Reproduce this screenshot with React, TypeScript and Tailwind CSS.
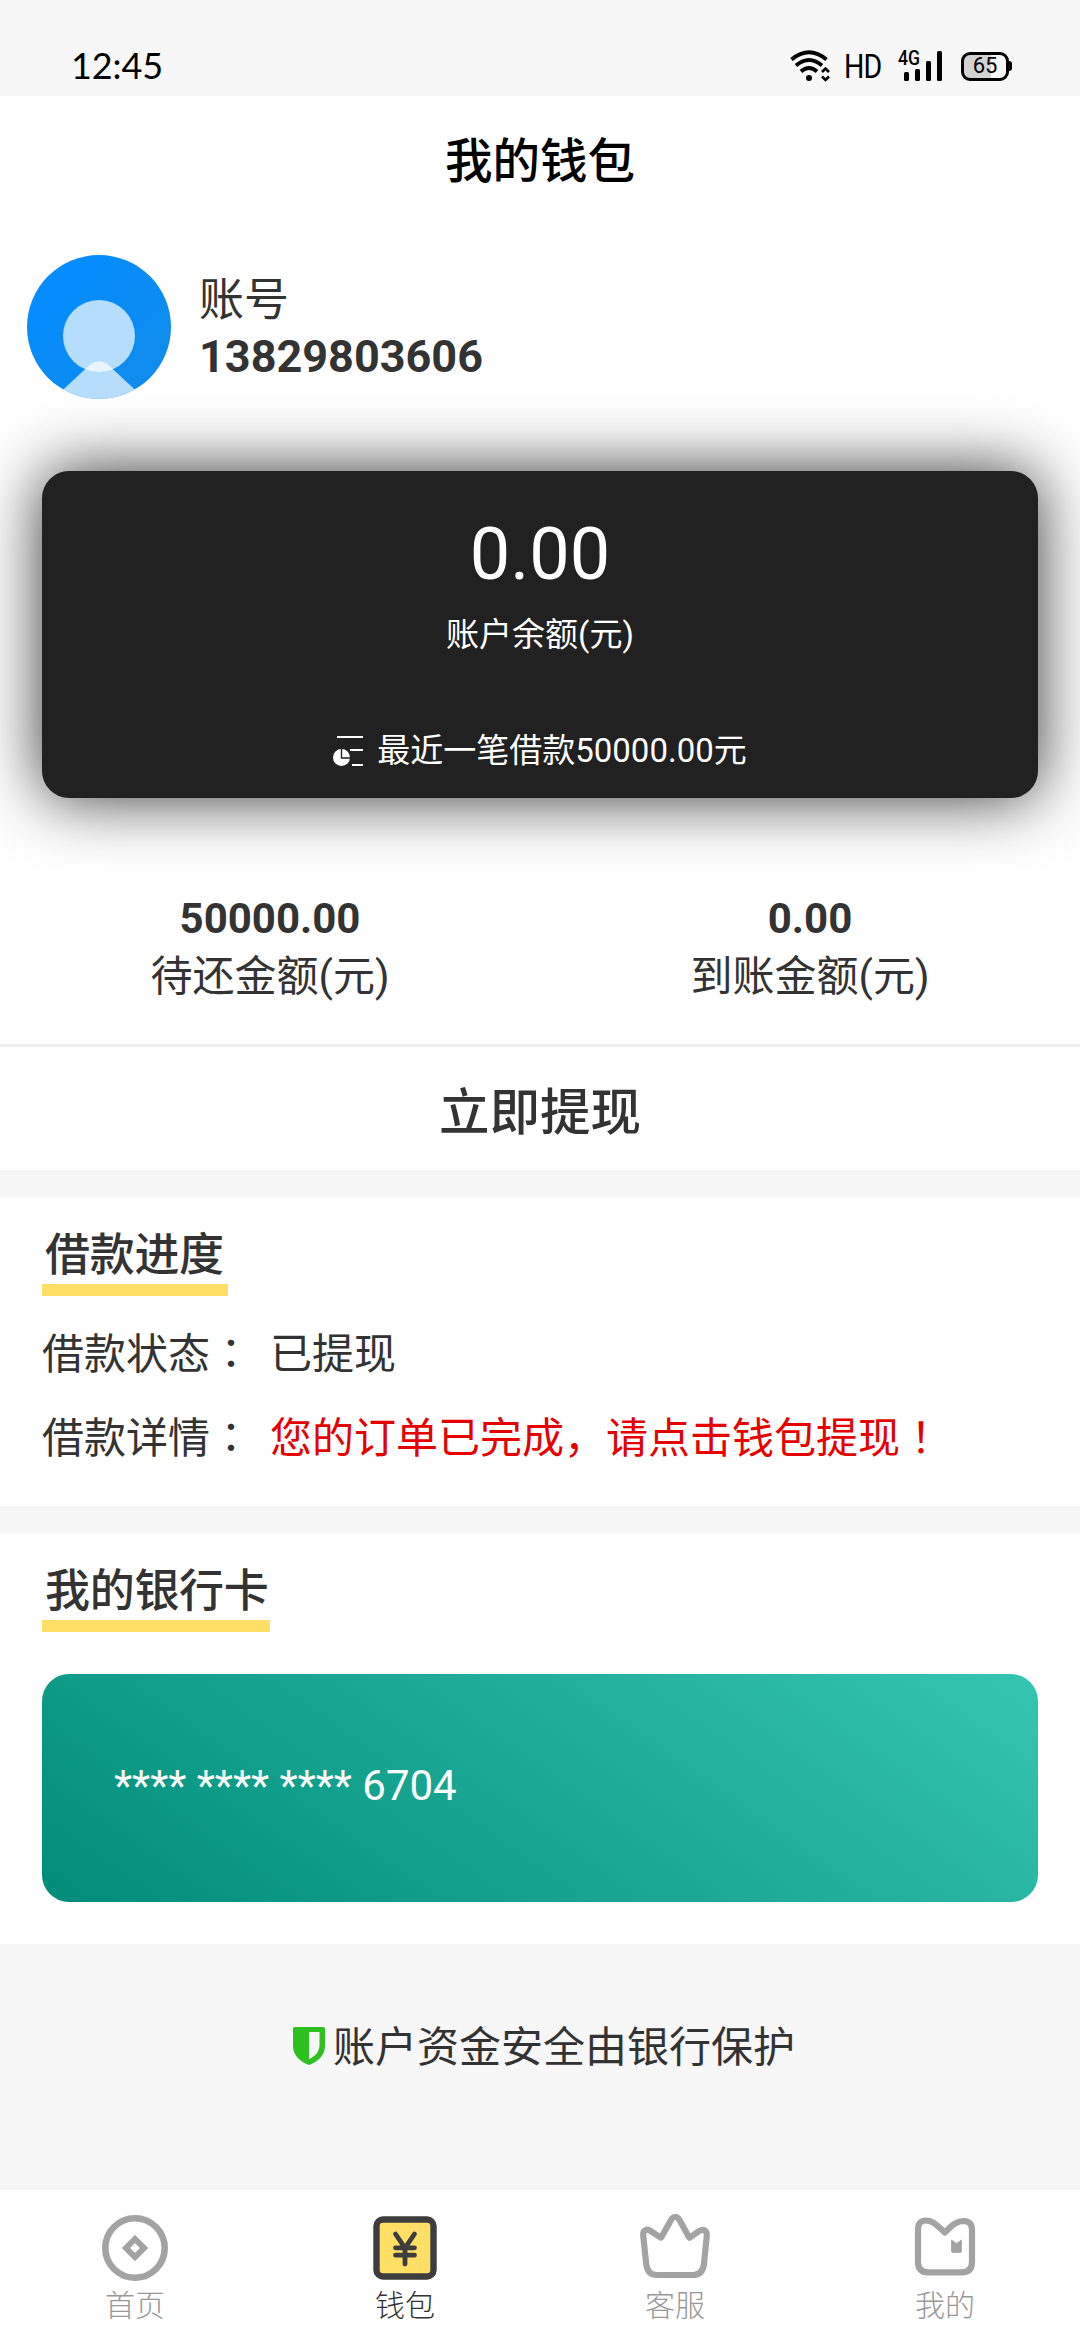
import type { ReactNode } from "react";

interface TabItem {
  label: string;
  icon: ReactNode;
  active?: boolean;
}

// Full-width punctuation is centred in its cell, as on the device font
function Punct({ children }: { children: string }) {
  return <span className="font-['Noto_Sans_CJK_TC',sans-serif] leading-[0]">{children}</span>;
}

function StatusBar() {
  return (
    <div className="flex h-24 items-start justify-between bg-[#f7f7f7] pl-[71px] pr-[68px] text-black">
      <span className="mt-[43px] font-['Lato',sans-serif] text-[36px] leading-[44px] tracking-[-0.1px]">12:45</span>
      <div className="mt-[50px] flex h-8 items-center">
        <svg width="41" height="32" viewBox="0 0 41 32" fill="none" stroke="#000" strokeWidth="3.8">
          <path d="M1.5 9.5 Q19 -5 36.500 9.500" />
          <path d="M6 15.500 Q19 4.500 32 15.500" />
          <path d="M11 21.500 Q19 14.500 27 21.500" />
          <circle cx="19" cy="28" r="3" fill="#000" stroke="none" />
          <path d="M32 22 L35.500 18.500 L39 22 M32 26.500 L35.500 30 L39 26.500" strokeWidth="2.6" />
        </svg>
        <span className="ml-[13px] w-[37px] font-['Roboto',sans-serif] text-[34px] leading-8 tracking-[-1px] origin-left scale-x-[0.84]">HD</span>
        <div className="relative ml-[17px] h-8 w-[45px]">
          <span className="absolute left-0 top-0 origin-left scale-x-[0.88] font-['Roboto',sans-serif] text-[20px] font-medium leading-4">4G</span>
          <svg width="45" height="32" viewBox="0 0 45 32" className="absolute left-0 top-0">
            <rect x="6" y="22" width="5" height="9" rx="1.500" />
            <rect x="17" y="19" width="5" height="12" rx="1.500" />
            <rect x="28" y="11" width="5" height="20" rx="1.500" />
            <rect x="39" y="1" width="5" height="30" rx="1.500" />
          </svg>
        </div>
        <div className="ml-[18px] flex items-center">
          <div className="flex h-[29px] w-[48px] items-center justify-center rounded-[9px] border-[3px] border-black bg-linear-to-r from-[#d2d2d2] from-65% to-[#f7f7f7] to-65% font-['Roboto',sans-serif] text-[22px] leading-none">
            65
          </div>
          <div className="h-2.5 w-[3px] rounded-r-full bg-black" />
        </div>
      </div>
    </div>
  );
}

function Avatar() {
  return (
    <svg width="144" height="144" viewBox="0 0 144 144">
      <defs>
        <clipPath id="avatar-clip">
          <circle cx="72" cy="72" r="72" />
        </clipPath>
        <linearGradient id="avatar-bg" x1="0" y1="0" x2="1" y2="1">
          <stop offset="0.2" stopColor="#058cff" />
          <stop offset="0.8" stopColor="#0f8ced" />
        </linearGradient>
      </defs>
      <g clipPath="url(#avatar-clip)">
        <rect width="144" height="144" fill="url(#avatar-bg)" />
        <circle cx="72" cy="81" r="36" fill="#fff" fillOpacity="0.7" />
        <path d="M62 110.500 Q72 102 82 110.500 L120 146 H24 Z" fill="#fff" fillOpacity="0.7" />
      </g>
    </svg>
  );
}

function BalanceCard() {
  return (
    <div className="mx-[42px] mt-[72px] flex h-[327px] flex-col items-center rounded-[27px] bg-[#212121] pt-[36px] text-white shadow-[0_0_66px_rgba(0,0,0,0.8)]">
      <div className="h-24 text-[72px] leading-24">0.00</div>
      <div className="mt-[7px] h-[50px] text-[33px] leading-[50px]">账户余额(元)</div>
      <div className="mt-[66px] flex h-[50px] items-center text-[33px] leading-[50px]">
        <svg width="30" height="30" viewBox="0 0 30 30" className="mr-[14px]">
          <path d="M4 1 H30 M17 14 H30 M19 29 H30" fill="none" stroke="#fff" strokeWidth="2" />
          <circle cx="8.500" cy="21.500" r="8.500" fill="#fff" />
          <path d="M8.500 12 V22 H18" fill="none" stroke="#212121" strokeWidth="1.400" />
        </svg>
        最近一笔借款50000.00元
      </div>
    </div>
  );
}

function Stat({ value, label }: { value: string; label: string }) {
  return (
    <div className="flex flex-1 flex-col items-center text-[42px] leading-[56px]">
      <span className="font-bold">{value}</span>
      <span className="mt-[2px]">{label}</span>
    </div>
  );
}

function SectionTitle({ children, width }: { children: string; width: string }) {
  return (
    <h2 className={`h-[70px] whitespace-nowrap border-b-12 border-[#ffdf66] pl-[3px] text-[45px] font-medium leading-[60px] tracking-[-0.3px] ${width}`}>
      {children}
    </h2>
  );
}

const tabs: TabItem[] = [
  {
    label: "首页",
    icon: (
      <svg width="72" height="72" viewBox="0 0 72 72" fill="none" stroke="#a3a3a3">
        <circle cx="36" cy="36" r="29.700" strokeWidth="6.600" />
        <path d="M36 27 L45 36 L36 45 L27 36 Z" strokeWidth="6" />
      </svg>
    ),
  },
  {
    label: "钱包",
    active: true,
    icon: (
      <svg width="72" height="72" viewBox="0 0 72 72" fill="none" stroke="#3d3d3d" strokeLinecap="round">
        <rect x="7.500" y="7.500" width="57" height="57" rx="6.500" fill="#ffdf66" strokeWidth="6.400" />
        <path d="M26.500 22 L36 36 L45.500 22 M36 36 V52 M26.500 35.800 H45.500 M26.500 43.200 H45.500" strokeWidth="4.800" />
      </svg>
    ),
  },
  {
    label: "客服",
    icon: (
      <svg width="72" height="72" viewBox="0 0 72 72" fill="none" stroke="#a3a3a3" strokeWidth="6.200" strokeLinejoin="round">
        <path d="M4.200 23.500 C3.700 18 8 16.500 11.500 18.800 L21.500 25.500 Q22 25.800 22.300 25.200 L32 8 C34 4 38.500 4 40.500 8 L50 25.200 Q50.300 25.800 50.800 25.500 L60.500 18.800 C64 16.500 68.300 18.500 67.800 23.500 L65 52 Q63.500 63 54 63 H18 Q8.500 63 7.200 52 Z" />
      </svg>
    ),
  },
  {
    label: "我的",
    icon: (
      <svg width="72" height="72" viewBox="0 0 72 72" fill="none" stroke="#a3a3a3" strokeWidth="6.200" strokeLinejoin="round">
        <path d="M9 18 Q9 8.500 16.500 8.500 C25 8.500 28 14 36 20.500 C43 13 48 9 55 9 Q63 9.500 63 18 V50 Q63 60.300 53 60.300 H19 Q9 60.300 9 50 Z" />
        <path d="M42.500 28 L47.500 31.500 L52.500 28 V39 Q52.500 40.500 51 40.500 H44 Q42.500 40.500 42.500 39 Z" fill="#a3a3a3" strokeWidth="0.800" />
      </svg>
    ),
  },
];

function TabBar() {
  return (
    <nav className="grid h-[150px] grid-cols-4 bg-white">
      {tabs.map((tab) => (
        <div key={tab.label} className="flex flex-col items-center pt-[22px]">
          {tab.icon}
          <span className={`mt-0.5 text-[30px] font-light leading-10 ${tab.active ? "text-[#333]" : "text-[#999]"}`}>
            {tab.label}
          </span>
        </div>
      ))}
    </nav>
  );
}

export default function App() {
  return (
    <div className="flex h-[2340px] w-[1080px] flex-col overflow-hidden bg-[#f7f7f7] font-['Roboto','Noto_Sans_CJK_SC',sans-serif] text-[#333]">
      <StatusBar />

      <main className="h-[1074px] bg-white">
        <h1 className="h-[132px] text-center text-[47.5px] font-medium leading-[132px] text-black">我的钱包</h1>

        <div className="flex pl-[27px] pt-[27px]">
          <Avatar />
          <div className="ml-7 mt-[18px] text-[45px] leading-[56px]">
            <div>账号</div>
            <div className="font-bold">13829803606</div>
          </div>
        </div>

        <BalanceCard />

        <div className="mt-[93px] flex h-[153px]">
          <Stat value="50000.00" label="待还金额(元)" />
          <Stat value="0.00" label="到账金额(元)" />
        </div>

        <button className="block h-[126px] w-full border-t-3 border-[#efefef] pt-2 text-center text-[50.5px] font-medium leading-[115px]">
          立即提现
        </button>
      </main>

      {/* Loan progress */}
      <section className="mt-[27px] h-[309px] bg-white px-[42px] pt-[29px]">
        <SectionTitle width="w-[186px]">借款进度</SectionTitle>
        <div className="mt-[17px] text-[42px] leading-[84px]">
          <div className="flex h-[84px]">
            <span className="w-[228px]">借款状态<Punct>：</Punct></span>
            <span>已提现</span>
          </div>
          <div className="flex h-[84px]">
            <span className="w-[228px]">借款详情<Punct>：</Punct></span>
            <span className="text-[#e60000]">您的订单已完成，请点击钱包提现<Punct>！</Punct></span>
          </div>
        </div>
      </section>

      {/* Bank card */}
      <section className="mt-[27px] h-[411px] bg-white px-[42px] pt-[29px]">
        <SectionTitle width="w-[228px]">我的银行卡</SectionTitle>
        <div className="mt-[42px] flex h-[228px] items-center rounded-[27px] bg-linear-[35deg,#008c78,#36c5b1] pb-1 pl-[72px] text-[42px] leading-none text-white">
          **** **** **** 6704
        </div>
      </section>

      <footer className="flex h-[246px] items-start justify-center pl-2 pt-[74px] text-[42px] leading-[60px]">
        <svg width="32" height="38" viewBox="0 0 32 38" className="mr-2 mt-[9px]">
          <path d="M2 0 H30 Q32 0 32 2 V19 C32 29 24 35 16 38 C8 35 0 29 0 19 V2 Q0 0 2 0 Z" fill="#2dc01e" />
          <path d="M16 5 H26.500 V18 C26.500 25 22 29.500 16 32 Z" fill="#f7f7f7" />
        </svg>
        <span>账户资金安全由银行保护</span>
      </footer>

      <TabBar />
    </div>
  );
}
